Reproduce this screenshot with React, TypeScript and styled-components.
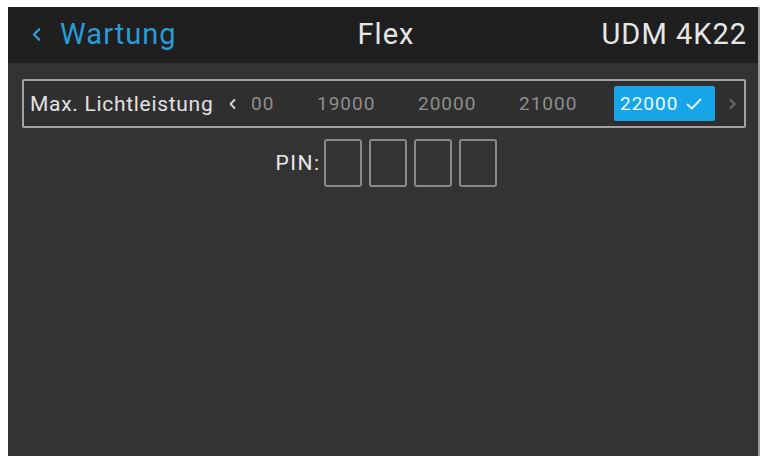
import * as React from 'react';
import styled, { createGlobalStyle } from 'styled-components';

const values = [18000, 19000, 20000, 21000, 22000];
const selected = 22000;

const Check = () => (
  <svg width="16" height="12" viewBox="0 0 16 12" fill="none">
    <path d="M1.5 6.5 L5.8 10.5 L14.5 1.5" stroke="#e8f6ff" strokeWidth="1.8" strokeLinecap="round" strokeLinejoin="round" />
  </svg>
);

const Chevron: React.FC<{ dir: 'left' | 'right'; color: string; size?: number }> = ({ dir, color, size = 10 }) => (
  <svg width={size * 0.7} height={size} viewBox="0 0 7 10" fill="none">
    <path
      d={dir === 'left' ? 'M5.5 1 L1.5 5 L5.5 9' : 'M1.5 1 L5.5 5 L1.5 9'}
      stroke={color}
      strokeWidth="1.8"
      strokeLinecap="round"
      strokeLinejoin="round"
    />
  </svg>
);

export default function App() {
  return (
    <>
      <GlobalStyle />
      <Screen>
        <Header>
          <Back>
            <Chevron dir="left" color="#2b9bd6" size={13} />
            <span>Wartung</span>
          </Back>
          <Title>Flex</Title>
          <Model>UDM 4K22</Model>
        </Header>
        <Body>
          <SettingRow>
            <Label>Max. Lichtleistung</Label>
            <ArrowCell width={24}>
              <Chevron dir="left" color="#d8d8d8" size={10} />
            </ArrowCell>
            <Viewport>
              <Track>
                {values.map((v) => (
                  <Option key={v} active={v === selected}>
                    {v}
                    {v === selected && <Check />}
                  </Option>
                ))}
              </Track>
            </Viewport>
            <ArrowCell width={29} shift={6}>
              <Chevron dir="right" color="#6d6d6d" size={10} />
            </ArrowCell>
          </SettingRow>
          <PinRow>
            <PinLabel>PIN:</PinLabel>
            {[0, 1, 2, 3].map((i) => (
              <PinBox key={i} />
            ))}
          </PinRow>
        </Body>
      </Screen>
    </>
  );
}

const GlobalStyle = createGlobalStyle`
  html, body {
    margin: 0;
    padding: 0;
    background: #ffffff;
  }
  body {
    font-family: Roboto, "Liberation Sans", Arial, sans-serif;
    overflow: hidden;
  }
`;

const Screen = styled.div`
  margin: 7px 0 0 8px;
  width: 752px;
  height: 449px;
  display: flex;
  flex-direction: column;
  background: #333333;
  border-right: 2px solid #9a9a9a;
  box-sizing: border-box;
`;

const Header = styled.div`
  height: 56px;
  flex: 0 0 56px;
  background: #1f1f1f;
  display: grid;
  grid-template-columns: 1fr auto 1fr;
  align-items: center;
  padding: 0 12px 0 24px;
  box-sizing: border-box;
`;

const HeaderText = styled.div`
  font-size: 29px;
  letter-spacing: 1px;
  padding-bottom: 2px;
  white-space: nowrap;
`;

const Back = styled(HeaderText)`
  display: flex;
  align-items: center;
  gap: 19px;
  color: #2b9bd6;
`;

const Title = styled(HeaderText)`
  color: #e6e6e6;
  margin-right: 6px;
`;

const Model = styled(HeaderText)`
  justify-self: end;
  color: #e6e6e6;
  margin-right: -1px;
`;

const Body = styled.div`
  flex: 1;
  display: flex;
  flex-direction: column;
  align-items: center;
  padding: 16px 12px 0 14px;
  gap: 11px;
`;

const SettingRow = styled.div`
  align-self: stretch;
  height: 49px;
  box-sizing: border-box;
  border: 2px solid #a3a3a3;
  border-radius: 2px;
  background: #2f2f2f;
  display: flex;
  align-items: center;
  padding-left: 6px;
`;

const Label = styled.div`
  color: #e2e2e2;
  font-size: 21px;
  letter-spacing: 0.7px;
  width: 190px;
  white-space: nowrap;
`;

const ArrowCell = styled.div<{ width: number; shift?: number }>`
  width: ${({ width }) => width}px;
  flex: 0 0 ${({ width }) => width}px;
  display: flex;
  justify-content: center;
  align-items: center;
  padding-left: ${({ shift }) => shift || 0}px;
  box-sizing: border-box;
`;

const Viewport = styled.div`
  width: 463px;
  flex: 0 0 463px;
  margin-left: 8px;
  overflow: hidden;
  display: flex;
`;

const Track = styled.div`
  display: flex;
  margin-left: -42px;
`;

const Option = styled.div<{ active?: boolean }>`
  flex: 0 0 101px;
  width: 101px;
  height: 35px;
  box-sizing: border-box;
  display: flex;
  align-items: center;
  gap: 8px;
  padding-left: 6px;
  font-size: 19px;
  letter-spacing: 1px;
  color: ${({ active }) => (active ? '#f2fbff' : '#8e8e8e')};
  background: ${({ active }) => (active ? '#17a5ea' : 'transparent')};
  border-radius: 2px;
`;

const PinRow = styled.div`
  display: flex;
  align-items: center;
  gap: 7px;
  margin-left: 4px;
`;

const PinLabel = styled.div`
  color: #e8e8e8;
  font-size: 21px;
  letter-spacing: 1.5px;
  margin-right: -4px;
`;

const PinBox = styled.div`
  width: 38px;
  height: 48px;
  box-sizing: border-box;
  border: 2px solid #8a8a8a;
  border-radius: 3px;
`;
